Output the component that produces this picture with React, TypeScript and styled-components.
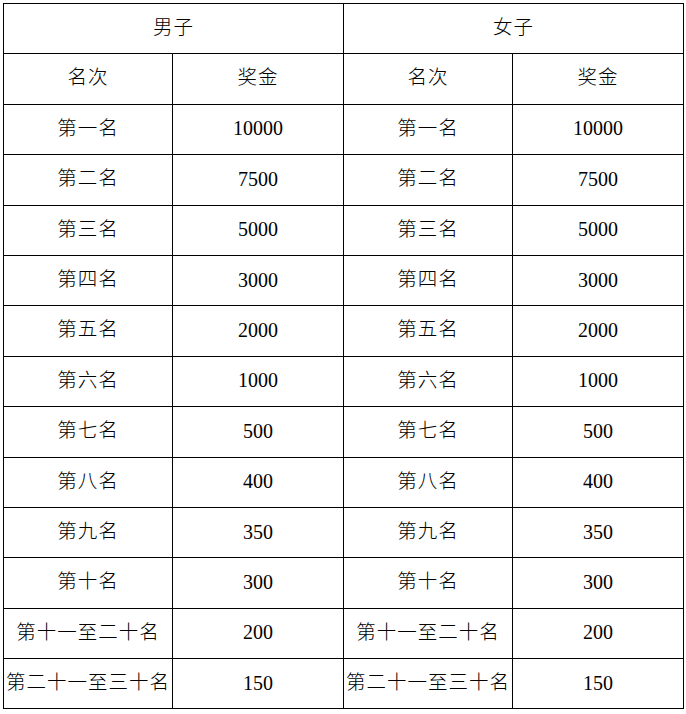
import React from 'react';
import styled, { createGlobalStyle } from 'styled-components';

const GlobalStyle = createGlobalStyle`
  html, body {
    margin: 0;
    padding: 0;
    background: #fff;
  }
`;

const Page = styled.div`
  padding: 3px;
  background: #fff;
`;

const Table = styled.table`
  border-collapse: collapse;
  table-layout: fixed;
  width: 680px;
  color: #000;
`;

const Row = styled.tr`
  height: 50.4px;
`;

const Cell = styled.td<{ $num?: boolean }>`
  border: 1px solid #000;
  padding: 0 0 ${(p) => (p.$num ? '2px' : '6px')};
  text-align: center;
  vertical-align: middle;
  white-space: nowrap;
  line-height: 1.2;
  font-family: ${(p) =>
    p.$num
      ? '"Liberation Serif", "Times New Roman", serif'
      : '"Noto Sans CJK SC", "Liberation Sans", sans-serif'};
  font-size: ${(p) => (p.$num ? '20px' : '19.5px')};
  letter-spacing: ${(p) => (p.$num ? '0' : '1px')};
  font-weight: 300;
`;

const men = [
  ['第一名', '10000'],
  ['第二名', '7500'],
  ['第三名', '5000'],
  ['第四名', '3000'],
  ['第五名', '2000'],
  ['第六名', '1000'],
  ['第七名', '500'],
  ['第八名', '400'],
  ['第九名', '350'],
  ['第十名', '300'],
  ['第十一至二十名', '200'],
  ['第二十一至三十名', '150'],
];

export default function App() {
  return (
    <Page>
      <GlobalStyle />
      <Table>
        <colgroup>
          <col style={{ width: 169 }} />
          <col style={{ width: 171 }} />
          <col style={{ width: 169 }} />
          <col style={{ width: 171 }} />
        </colgroup>
        <tbody>
          <Row>
            <Cell colSpan={2}>男子</Cell>
            <Cell colSpan={2}>女子</Cell>
          </Row>
          <Row>
            <Cell>名次</Cell>
            <Cell>奖金</Cell>
            <Cell>名次</Cell>
            <Cell>奖金</Cell>
          </Row>
          {men.map(([place, prize]) => (
            <Row key={place}>
              <Cell>{place}</Cell>
              <Cell $num>{prize}</Cell>
              <Cell>{place}</Cell>
              <Cell $num>{prize}</Cell>
            </Row>
          ))}
        </tbody>
      </Table>
    </Page>
  );
}
